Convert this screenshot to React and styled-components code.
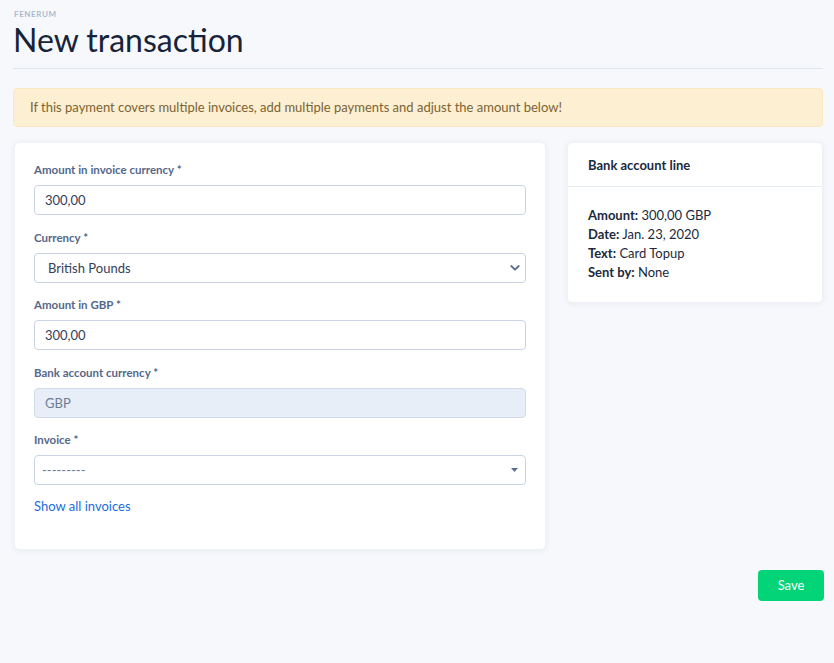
import React from "react";
import styled, { createGlobalStyle } from "styled-components";

const Global = createGlobalStyle`
  html, body { margin: 0; padding: 0; background: #f7f8fc; }
  body { font-family: Lato, "Noto Sans", sans-serif; color: #1b2a3d; }
  * { box-sizing: border-box; }
`;

const Page = styled.div`
  padding: 9px 11px 62px 13px;
  min-height: 663px;
`;

const Brand = styled.div`
  font-size: 8px;
  font-weight: 700;
  letter-spacing: 0.6px;
  color: #a9b8cf;
  line-height: 10px;
  padding-left: 1px;
`;

const Title = styled.h1`
  margin: 0;
  font-size: 32px;
  font-weight: 400;
  line-height: 42px;
  color: #16243a;
`;

const Rule = styled.hr`
  border: 0;
  border-top: 1px solid #dfe6f0;
  margin: 7px 0 19px;
`;

const Alert = styled.div`
  background: #fcefd2;
  border: 1px solid #f8e8c2;
  border-radius: 4px;
  color: #7c6331;
  font-size: 13px;
  line-height: 17px;
  padding: 10px 16px;
  margin-bottom: 15px;
`;

const Grid = styled.div`
  display: grid;
  grid-template-columns: 532fr 256fr;
  gap: 21px;
  align-items: start;
  padding-left: 1px;
`;

const Card = styled.div`
  background: #fff;
  border-radius: 5px;
  box-shadow: 0 1px 6px rgba(40, 60, 100, 0.07);
  border: 1px solid #eef1f6;
`;

const FormBody = styled.div`
  padding: 19px 19px 34px;
`;

const Field = styled.div`
  margin-bottom: 14.5px;
`;

const Label = styled.label`
  display: block;
  font-size: 11.5px;
  font-weight: 700;
  line-height: 16px;
  color: #55688a;
  margin-bottom: 7px;
`;

const Control = styled.div`
  position: relative;
  height: 30px;
  border: 1px solid ${(p) => (p.disabled ? "#cfdbea" : "#c9d5e7")};
  border-radius: 4px;
  background: ${(p) => (p.disabled ? "#e7eef7" : "#fff")};
  display: flex;
  align-items: center;
  padding-left: ${(p) => p.pad || 10}px;
  font-size: 13px;
  color: ${(p) => (p.muted ? "#6b7c98" : "#34405a")};
`;

const Arrow = styled.span`
  position: absolute;
  right: ${(p) => p.right || 7}px;
  top: 50%;
  transform: translateY(-50%);
  display: flex;
`;

const Link = styled.a`
  display: block;
  width: fit-content;
  font-size: 13px;
  color: #1c6ddb;
  text-decoration: none;
  line-height: 18px;
  margin-top: -3px;
`;

const SideHeader = styled.div`
  padding: 0 20px;
  height: 44px;
  display: flex;
  align-items: center;
  font-size: 13px;
  font-weight: 700;
  color: #1b2a3d;
  border-bottom: 1px solid #e6ecf4;
`;

const SideBody = styled.div`
  padding: 19px 20px 20px;
  font-size: 13px;
  line-height: 19px;
  color: #1b2a3d;
`;

const Line = styled.div`
  b { font-weight: 700; }
`;

const Footer = styled.div`
  display: flex;
  justify-content: flex-end;
  margin-top: 20px;
`;

const SaveButton = styled.button`
  background: #03d477;
  color: #fff;
  border: 0;
  border-radius: 4px;
  width: 66px;
  height: 31px;
  font-family: inherit;
  font-size: 13px;
  margin-right: -1px;
  cursor: pointer;
`;

const Chevron = () => (
  <svg width="10" height="7" viewBox="0 0 10 7">
    <path d="M1.3 1.5 L5 5.2 L8.7 1.5" fill="none" stroke="#5d6f8f" strokeWidth="1.8" strokeLinecap="round" strokeLinejoin="round" />
  </svg>
);

const Caret = () => (
  <svg width="7" height="4" viewBox="0 0 7 4">
    <path d="M0 0 H7 L3.5 4 Z" fill="#5d6f8f" />
  </svg>
);

export default function App() {
  return (
    <>
      <Global />
      <Page>
        <Brand>FENERUM</Brand>
        <Title>New transaction</Title>
        <Rule />
        <Alert>
          If this payment covers multiple invoices, add multiple payments and adjust the amount below!
        </Alert>
        <Grid>
          <Card>
            <FormBody>
              <Field>
                <Label>Amount in invoice currency *</Label>
                <Control>300,00</Control>
              </Field>
              <Field>
                <Label>Currency *</Label>
                <Control pad={13}>
                  British Pounds
                  <Arrow right={5}><Chevron /></Arrow>
                </Control>
              </Field>
              <Field>
                <Label>Amount in GBP *</Label>
                <Control>300,00</Control>
              </Field>
              <Field>
                <Label>Bank account currency *</Label>
                <Control disabled muted>GBP</Control>
              </Field>
              <Field>
                <Label>Invoice *</Label>
                <Control pad={7} muted>
                  ---------
                  <Arrow right={7}><Caret /></Arrow>
                </Control>
              </Field>
              <Link href="#">Show all invoices</Link>
            </FormBody>
          </Card>
          <Card>
            <SideHeader>Bank account line</SideHeader>
            <SideBody>
              <Line><b>Amount:</b> 300,00 GBP</Line>
              <Line><b>Date:</b> Jan. 23, 2020</Line>
              <Line><b>Text:</b> Card Topup</Line>
              <Line><b>Sent by:</b> None</Line>
            </SideBody>
          </Card>
        </Grid>
        <Footer>
          <SaveButton>Save</SaveButton>
        </Footer>
      </Page>
    </>
  );
}
